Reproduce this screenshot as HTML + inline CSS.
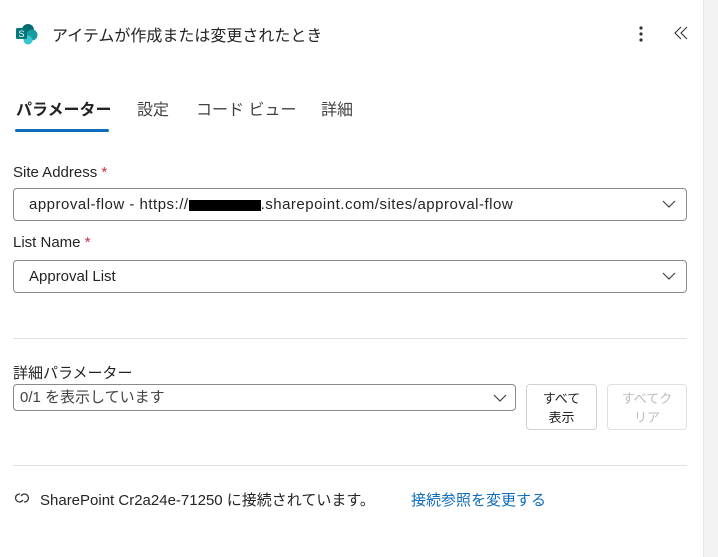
<!DOCTYPE html>
<html><head><meta charset="utf-8"><style>
*{box-sizing:border-box;margin:0;padding:0}
body{width:718px;height:557px;overflow:hidden;background:#fff;font-family:"Liberation Sans","Noto Sans CJK JP",sans-serif;color:#242424;position:relative;font-size:14px}
.a{position:absolute;white-space:nowrap}
.field{position:absolute;left:13px;width:674px;height:33px;border:1px solid #8a8a8a;border-radius:4px;padding-left:15px;line-height:31px;font-size:15px}
.chev{position:absolute;right:10px;top:10px}
.req{color:#c4314b}
.btn{position:absolute;top:384px;height:46px;border:1px solid #d1d1d1;border-radius:4px;font-size:13px;text-align:center;line-height:19px;padding-top:4px}
</style></head><body>
<div class="a" style="left:703px;top:0;width:15px;height:557px;background:#f3f3f3;border-left:1px solid #e6e6e6"></div>
<svg class="a" style="left:15px;top:23px" width="24" height="22" viewBox="0 0 24 22"><circle cx="13" cy="7" r="6" fill="#036c70"/><circle cx="17" cy="12" r="5.5" fill="#1a9ba1"/><circle cx="13" cy="17" r="4.5" fill="#37c6d0"/><rect x="1" y="5" width="11" height="11" rx="1.5" fill="#03787c"/><text x="6.5" y="14" font-size="9" fill="#fff" text-anchor="middle" font-family="Liberation Sans">S</text></svg>
<div class="a" style="left:52px;top:22px;font-size:16px">アイテムが作成または変更されたとき</div>
<svg class="a" style="left:638px;top:26px" width="6" height="16"><circle cx="3" cy="2" r="1.6" fill="#333"/><circle cx="3" cy="8" r="1.6" fill="#333"/><circle cx="3" cy="14" r="1.6" fill="#333"/></svg>
<svg class="a" style="left:674px;top:26px" width="14" height="14" viewBox="0 0 14 14"><path d="M7 1L1 7l6 6M13 1L7 7l6 6" fill="none" stroke="#333" stroke-width="1.1"/></svg>
<div class="a" style="left:16px;top:96px;font-size:16px;font-weight:bold">パラメーター</div>
<div class="a" style="left:15px;top:129px;width:94px;height:3px;background:#0f6cbd;border-radius:2px"></div>
<div class="a" style="left:137px;top:96px;font-size:16px;color:#424242">設定</div>
<div class="a" style="left:196px;top:96px;font-size:16px;color:#424242">コード ビュー</div>
<div class="a" style="left:321px;top:96px;font-size:16px;color:#424242">詳細</div>
<div class="a" style="left:13px;top:164px;font-size:15px">Site Address <span class="req">*</span></div>
<div class="field" style="top:188px;letter-spacing:0.5px">approval-flow - https://<span style="display:inline-block;width:72px;height:11px;background:#000;vertical-align:middle"></span>.sharepoint.com/sites/approval-flow<svg class="chev" width="14" height="10"><path d="M1 2l6 6 6-6" fill="none" stroke="#444" stroke-width="1.2"/></svg></div>
<div class="a" style="left:13px;top:234px;font-size:15px">List Name <span class="req">*</span></div>
<div class="field" style="top:260px">Approval List<svg class="chev" width="14" height="10"><path d="M1 2l6 6 6-6" fill="none" stroke="#444" stroke-width="1.2"/></svg></div>
<div class="a" style="left:13px;top:338px;width:674px;height:1px;background:#e0e0e0"></div>
<div class="a" style="left:13px;top:362px;font-size:15px">詳細パラメーター</div>
<div class="field" style="top:384px;width:503px;height:27px;line-height:25px;padding-left:6px;color:#424242">0/1 を表示しています<svg class="chev" style="top:8px;right:8px" width="14" height="10"><path d="M1 2l6 6 6-6" fill="none" stroke="#444" stroke-width="1.2"/></svg></div>
<div class="btn" style="left:526px;width:71px">すべて<br>表示</div>
<div class="btn" style="left:607px;width:80px;color:#bdbdbd;border-color:#e0e0e0">すべてク<br>リア</div>
<div class="a" style="left:13px;top:465px;width:674px;height:1px;background:#e0e0e0"></div>
<svg class="a" style="left:14px;top:491px" width="16" height="14" viewBox="0 0 16 14"><path d="M6 3a4 4 0 1 0 3 6M10 11a4 4 0 1 0-3-6" fill="none" stroke="#333" stroke-width="1.3"/></svg>
<div class="a" style="left:40px;top:489px;font-size:15px">SharePoint Cr2a24e-71250 に接続されています。</div>
<div class="a" style="left:411px;top:489px;font-size:15px;color:#0f6cbd">接続参照を変更する</div>
</body></html>
